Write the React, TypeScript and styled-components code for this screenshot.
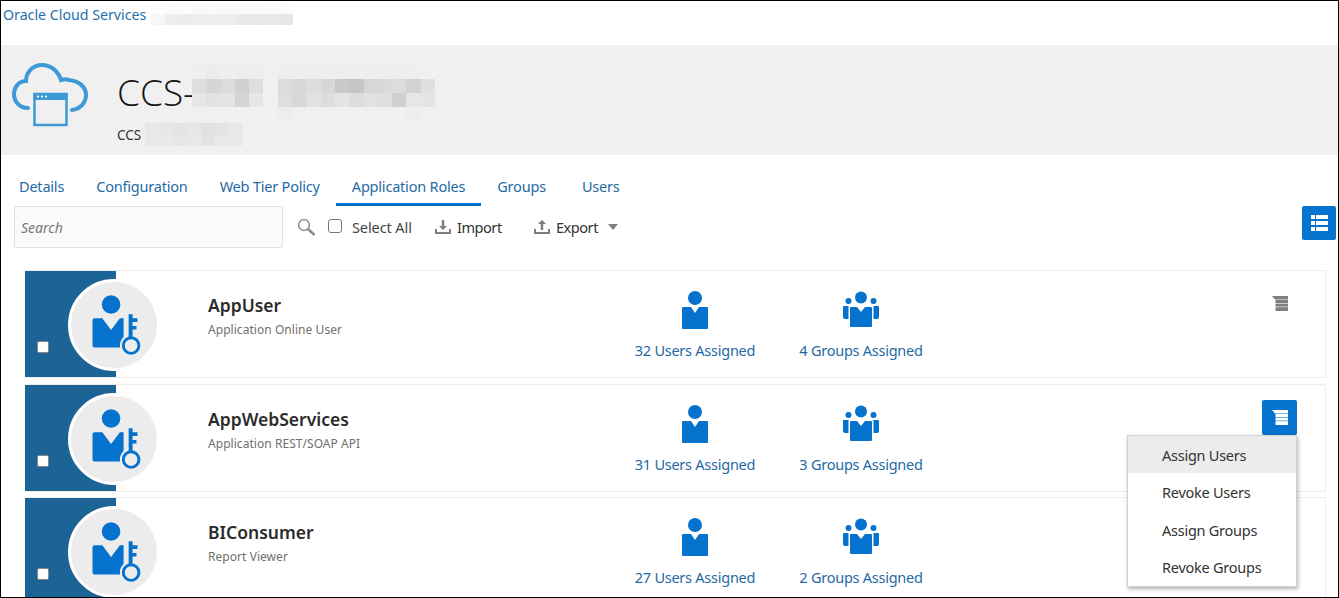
import styled, { createGlobalStyle } from "styled-components";

const GlobalStyle = createGlobalStyle`
  html, body {
    margin: 0;
    padding: 0;
    background: #fff;
    font-family: "Noto Sans", "Open Sans", sans-serif;
  }
`;

const tabs = ["Details", "Configuration", "Web Tier Policy", "Application Roles", "Groups", "Users"];

const roles = [
  { name: "AppUser", desc: "Application Online User", users: 32, groups: 4 },
  { name: "AppWebServices", desc: "Application REST/SOAP API", users: 31, groups: 3, open: true },
  { name: "BIConsumer", desc: "Report Viewer", users: 27, groups: 2 },
];

const menuItems = ["Assign Users", "Revoke Users", "Assign Groups", "Revoke Groups"];

const crumbBlur = [
  ["#fdfdfd", "#fafafa", "#fbfbfb", "#f9f9f9", "#fafafa", "#f9f9f9", "#f9f9f9", "#fafafa", "#fbfbfb", "#fcfcfc"],
  ["#f7f7f7", "#ededed", "#ececec", "#efefef", "#ededed", "#eeeeee", "#e9e9e9", "#e8e8e8", "#e9e9e9", "#e6e6e6"],
];

const titleBlur = [
  ["#efefef", "#ececec", "#eeeeee", "#ededed", "#eeeeee", "#f0f0f0", "#eeeeee", "#efefef", "#eeeeee", "#eeeeee", "#eeeeee", "#efefef", "#eeeeee", "#ededed", "#eeeeee", "#efefef", "#f0f0f0"],
  ["#dedede", "#d6d6d6", "#dcdcdc", "#cfd0d1", "#dedede", "#f0f0f0", "#dcdcdc", "#d8d8d8", "#dedcdc", "#d9d7d7", "#c9c9c9", "#c6c6c6", "#d7d7d7", "#d9d9d9", "#dcdcdc", "#d2d2d2", "#dfe0e2"],
  ["#e6e6e6", "#e2e2e2", "#e4e4e4", "#d3d5d5", "#e6e6e6", "#f0f0f0", "#dedede", "#d8d8d8", "#e2e2e2", "#dddddd", "#e4e4e4", "#dcdcdc", "#e0e2e2", "#dee0e0", "#d0d0d0", "#e6e6e6", "#e2e4e6"],
  ["#f0f0f0", "#f0f0f0", "#f0f0f0", "#f0f0f0", "#f0f0f0", "#f0f0f0", "#ededed", "#f0f0f0", "#f0f0f0", "#f0f0f0", "#f0f0f0", "#f0f0f0", "#f0f0f0", "#f0f0f0", "#f0f0f0", "#ededed", "#f0f0f0"],
];

const subBlur = [
  ["#e8e8e8", "#e6e6e6", "#e4e3e2", "#e6e6e6", "#e2e1e0", "#e4e4e4", "#e8e8e8"],
  ["#e8e8e8", "#e9e9e9", "#e7e6e5", "#e8e8e8", "#e3e2e1", "#e8e8e8", "#e9e9e9"],
];

const Mosaic = ({ rows, cell, height }: { rows: string[][]; cell: number; height: number }) => (
  <MosaicGrid $cols={rows[0].length} $cell={cell} $height={height}>
    {rows.flat().map((c, i) => (
      <span key={i} style={{ background: c }} />
    ))}
  </MosaicGrid>
);

const CloudIcon = () => (
  <svg width="76" height="64" viewBox="0 0 76 64" fill="none">
    <path
      d="M16 45 C7 45 2 38 2 31 C2 24 7 18 14 18 C14 9 21 2 30 2 C39 2 46 8 49 17 C52 16 54 16 57 17 C67 18 74 24 74 32 C74 40 68 46 60 47"
      stroke="#3d9ad6"
      strokeWidth="4"
      strokeLinecap="round"
    />
    <rect x="22.5" y="31" width="32" height="31" fill="#f0f0f0" stroke="#3d9ad6" strokeWidth="2.5" />
    <rect x="21.5" y="30" width="34" height="7" fill="#3d9ad6" />
    <circle cx="26" cy="33.5" r="1.1" fill="#fff" />
    <circle cx="30" cy="33.5" r="1.1" fill="#fff" />
    <circle cx="34" cy="33.5" r="1.1" fill="#fff" />
  </svg>
);

const SearchIcon = () => (
  <svg width="19" height="18" viewBox="0 0 19 18" fill="none">
    <circle cx="7" cy="7" r="5.4" stroke="#8a8a8a" strokeWidth="1.5" />
    <path d="M11 11 L17.5 17" stroke="#8a8a8a" strokeWidth="2.6" />
  </svg>
);

const TrayIcon = ({ up }: { up?: boolean }) => (
  <svg width="16" height="14" viewBox="0 0 16 14" fill="#7d7d7d">
    <path d="M0 9h2v3h12V9h2v5H0z" />
    {up ? <path d="M8 0l4 4H9.2v6H6.8V4H4z" /> : <path d="M6.8 0h2.4v6H12l-4 4-4-4h2.8z" />}
  </svg>
);

const TableIcon = () => (
  <svg width="17" height="16" viewBox="0 0 17 16" fill="#fff">
    <rect x="0" y="0" width="4" height="4" />
    <rect x="5" y="0" width="12" height="4" />
    <rect x="0" y="6" width="4" height="4" />
    <rect x="5" y="6" width="12" height="4" />
    <rect x="0" y="12" width="4" height="4" />
    <rect x="5" y="12" width="12" height="4" />
  </svg>
);

const MenuIcon = ({ color }: { color: string }) => (
  <svg width="16" height="15" viewBox="0 0 16 15" fill={color}>
    <path d="M0 0h16v3.4H3z" />
    <rect x="3.5" y="4" width="12.5" height="3" />
    <rect x="3.5" y="7.6" width="12.5" height="3" />
    <rect x="3.5" y="11.2" width="12.5" height="3.8" />
  </svg>
);

const UserIcon = () => (
  <svg width="28" height="39" viewBox="0 0 28 39" fill="#0572ce">
    <circle cx="14" cy="7" r="7" />
    <path d="M2 16h8l4 6 4-6h8a1 1 0 0 1 1 1v20a1 1 0 0 1-1 1H2a1 1 0 0 1-1-1V17a1 1 0 0 1 1-1z" />
  </svg>
);

const GroupIcon = () => (
  <svg width="38" height="36" viewBox="0 0 38 36" fill="#0572ce">
    <circle cx="19" cy="6.5" r="6" />
    <circle cx="6.5" cy="10" r="3" />
    <circle cx="31.5" cy="10" r="3" />
    <path d="M9 16h6l4 5 4-5h6a1 1 0 0 1 1 1v18a1 1 0 0 1-1 1H9a1 1 0 0 1-1-1V17a1 1 0 0 1 1-1z" />
    <path d="M2 15h4.5v13H3a2 2 0 0 1-2-2V16a1 1 0 0 1 1-1z" />
    <path d="M31.5 15H36a1 1 0 0 1 1 1v10a2 2 0 0 1-2 2h-3.5z" />
  </svg>
);

const RoleIcon = () => (
  <svg width="88" height="88" viewBox="0 0 88 88" fill="#0572ce">
    <circle cx="41" cy="23" r="9.5" />
    <path d="M24 37h8l9 12 9-12h4v30H24a2 2 0 0 1-2-2V39a2 2 0 0 1 2-2z" />
    <circle cx="61.5" cy="65" r="11.5" fill="#ececec" />
    <rect x="54" y="32" width="4" height="30" fill="#ececec" />
    <path d="M59 33h4v4h5v4h-5v4h4v3.5h-4V58h-4z" />
    <circle cx="61.5" cy="65" r="8" fill="#ececec" stroke="#0572ce" strokeWidth="3" />
  </svg>
);

const App = () => {
  return (
    <Frame>
      <GlobalStyle />
      <TopBar>
        <Crumb href="#">Oracle Cloud Services</Crumb>
        <Mosaic rows={crumbBlur} cell={14.3} height={22} />
      </TopBar>

      <Banner>
        <CloudIcon />
        <BannerText>
          <TitleRow>
            <Title>CCS-</Title>
            <Mosaic rows={titleBlur} cell={14.3} height={56} />
          </TitleRow>
          <SubRow>
            <SubTitle>CCS</SubTitle>
            <Mosaic rows={subBlur} cell={14} height={23} />
          </SubRow>
        </BannerText>
      </Banner>

      <Tabs>
        {tabs.map((tab) => (
          <Tab key={tab} href="#" $active={tab === "Application Roles"}>
            {tab}
          </Tab>
        ))}
      </Tabs>

      <Toolbar>
        <SearchBox>Search</SearchBox>
        <SearchButton>
          <SearchIcon />
        </SearchButton>
        <SelectAll>
          <ToolCheck />
          Select All
        </SelectAll>
        <ToolButton $width={99}>
          <TrayIcon />
          Import
        </ToolButton>
        <ToolButton $width={100}>
          <TrayIcon up />
          Export
          <Caret />
        </ToolButton>
        <ViewButton>
          <TableIcon />
        </ViewButton>
      </Toolbar>

      <List>
        {roles.map((role) => (
          <Card key={role.name}>
            <Badge>
              <RowCheck />
            </Badge>
            <Avatar>
              <RoleIcon />
            </Avatar>
            <Info>
              <RoleName>{role.name}</RoleName>
              <RoleDesc>{role.desc}</RoleDesc>
            </Info>
            <Stat>
              <StatIcon>
                <UserIcon />
              </StatIcon>
              <StatLink href="#">{role.users} Users Assigned</StatLink>
            </Stat>
            <Stat>
              <StatIcon>
                <GroupIcon />
              </StatIcon>
              <StatLink href="#">{role.groups} Groups Assigned</StatLink>
            </Stat>
            <Actions>
              <ActionButton $open={role.open}>
                <MenuIcon color={role.open ? "#fff" : "#7f7f7f"} />
              </ActionButton>
              {role.open && (
                <Dropdown>
                  {menuItems.map((item, i) => (
                    <DropdownItem key={item} $hover={i === 0}>
                      {item}
                    </DropdownItem>
                  ))}
                </Dropdown>
              )}
            </Actions>
          </Card>
        ))}
      </List>
    </Frame>
  );
};

const Frame = styled.div`
  box-sizing: border-box;
  width: 1339px;
  height: 598px;
  overflow: hidden;
  border: 1px solid #000;
`;

const MosaicGrid = styled.div<{ $cols: number; $cell: number; $height: number }>`
  display: grid;
  grid-template-columns: repeat(${(p) => p.$cols}, ${(p) => p.$cell}px);
  grid-auto-rows: 1fr;
  height: ${(p) => p.$height}px;
`;

const TopBar = styled.div`
  height: 44px;
  display: flex;
  align-items: flex-start;
  gap: 4px;
  padding: 2px 0 0 2px;
  box-sizing: border-box;
`;

const Crumb = styled.a`
  font-size: 14.2px;
  line-height: 24px;
  color: #1f6fad;
  text-decoration: none;
`;

const Banner = styled.div`
  height: 110px;
  background: #f0f0f0;
  display: flex;
  align-items: flex-start;
  padding: 18px 0 0 11px;
  box-sizing: border-box;
  gap: 29px;
`;

const BannerText = styled.div`
  display: flex;
  flex-direction: column;
`;

const TitleRow = styled.div`
  display: flex;
  align-items: flex-start;
  height: 58px;
  margin-top: 2px;
`;

const Title = styled.div`
  font-size: 37px;
  font-weight: 300;
  line-height: 54px;
  color: #161513;
  width: 75px;
  font-family: "Open Sans", "Noto Sans", sans-serif;
`;

const SubRow = styled.div`
  display: flex;
  align-items: center;
  gap: 2px;
`;

const SubTitle = styled.div`
  font-size: 13.5px;
  color: #333;
  width: 26px;
`;

const Tabs = styled.nav`
  height: 51px;
  display: flex;
  padding-left: 2px;
  box-sizing: border-box;
`;

const Tab = styled.a<{ $active?: boolean }>`
  height: 51px;
  box-sizing: border-box;
  padding: 20px 16px 0;
  font-size: 14.5px;
  line-height: 22px;
  letter-spacing: -0.2px;
  color: #1f6aa5;
  text-decoration: none;
  white-space: nowrap;
  border-bottom: 3px solid ${(p) => (p.$active ? "#0572ce" : "transparent")};

  &:last-child {
    margin-left: 4px;
  }
`;

const Toolbar = styled.div`
  display: flex;
  align-items: flex-start;
  height: 64px;
  padding-left: 13px;
  box-sizing: border-box;
`;

const SearchBox = styled.div`
  width: 269px;
  height: 42px;
  box-sizing: border-box;
  background: #fafafa;
  border: 1px solid #e2e2e2;
  border-radius: 2px;
  padding-left: 6px;
  font-size: 14px;
  line-height: 41px;
  font-style: italic;
  color: #777;
`;

const SearchButton = styled.div`
  width: 33px;
  height: 42px;
  display: flex;
  align-items: center;
  justify-content: flex-end;
  margin-right: 12px;
`;

const SelectAll = styled.div`
  display: flex;
  align-items: center;
  gap: 10px;
  width: 107px;
  height: 42px;
  font-size: 14.5px;
  letter-spacing: -0.1px;
  color: #444;
`;

const ToolCheck = styled.span`
  width: 14px;
  height: 14px;
  box-sizing: border-box;
  border: 1px solid #777;
  border-radius: 3px;
  margin-top: -3px;
  background: #fff;
`;

const ToolButton = styled.div<{ $width: number }>`
  display: flex;
  align-items: center;
  gap: 6px;
  width: ${(p) => p.$width}px;
  height: 42px;
  font-size: 14.5px;
  letter-spacing: -0.45px;
  color: #333;
`;

const Caret = styled.span`
  width: 0;
  height: 0;
  margin-left: 4px;
  margin-top: -1px;
  border: 5px solid transparent;
  border-top: 6px solid #808080;
  border-bottom: 0;
`;

const ViewButton = styled.div`
  margin-left: auto;
  margin-right: 2px;
  width: 34px;
  height: 34px;
  background: #0572ce;
  border-radius: 2px;
  display: flex;
  align-items: center;
  justify-content: center;
`;

const List = styled.div`
  display: flex;
  flex-direction: column;
  gap: 5.5px;
  padding-left: 24px;
`;

const Card = styled.div`
  position: relative;
  box-sizing: border-box;
  width: 1301px;
  height: 108px;
  flex: none;
  border: 1px solid #eeeeee;
  border-left: 0;
  display: flex;
`;

const Badge = styled.div`
  width: 91px;
  flex: none;
  background: #1c6496;
  display: flex;
  align-items: flex-end;
  padding: 0 0 24px 12px;
  box-sizing: border-box;
`;

const RowCheck = styled.span`
  width: 12px;
  height: 12px;
  background: #fff;
  border: 1px solid #888;
  border-radius: 2px;
  box-sizing: border-box;
`;

const Avatar = styled.div`
  position: absolute;
  left: 43px;
  top: 8px;
  width: 92px;
  height: 92px;
  box-sizing: border-box;
  border-radius: 50%;
  background: #ececec;
  border: 3px solid #fff;
  display: flex;
  align-items: center;
  justify-content: center;
`;

const Info = styled.div`
  width: 407px;
  margin-left: 92px;
  flex: none;
  padding-top: 21px;
`;

const RoleName = styled.div`
  font-size: 17.5px;
  line-height: 26px;
  font-weight: 600;
  color: #2b2b2b;
`;

const RoleDesc = styled.div`
  font-size: 12px;
  line-height: 20px;
  margin-top: 2px;
  letter-spacing: 0.05px;
  color: #707070;
`;

const Stat = styled.div`
  width: 160px;
  margin-right: 6px;
  flex: none;
  display: flex;
  flex-direction: column;
  align-items: center;
`;

const StatIcon = styled.div`
  height: 40px;
  margin-top: 20px;
  display: flex;
  align-items: flex-start;
`;

const StatLink = styled.a`
  margin-top: 7px;
  font-size: 14.5px;
  line-height: 24px;
  letter-spacing: -0.25px;
  color: #1f6aa5;
  text-decoration: none;
  white-space: nowrap;
`;

const Actions = styled.div`
  margin-left: auto;
  margin-right: 28px;
  padding-top: 15px;
  position: relative;
`;

const ActionButton = styled.div<{ $open?: boolean }>`
  width: 35px;
  height: 35px;
  border-radius: 2px;
  background: ${(p) => (p.$open ? "#0572ce" : "transparent")};
  display: flex;
  align-items: center;
  justify-content: center;
`;

const Dropdown = styled.ul`
  position: absolute;
  top: 50px;
  right: 0;
  z-index: 2;
  width: 170px;
  margin: 0;
  padding: 0;
  list-style: none;
  box-sizing: border-box;
  background: #fff;
  border: 1px solid #d2d2d2;
  box-shadow: 1px 2px 4px rgba(0, 0, 0, 0.3);
`;

const DropdownItem = styled.li<{ $hover?: boolean }>`
  height: 37.5px;
  padding-left: 34px;
  font-size: 14.5px;
  line-height: 38px;
  letter-spacing: -0.25px;
  color: #333;
  background: ${(p) => (p.$hover ? "#ececec" : "transparent")};
`;

export default App;
